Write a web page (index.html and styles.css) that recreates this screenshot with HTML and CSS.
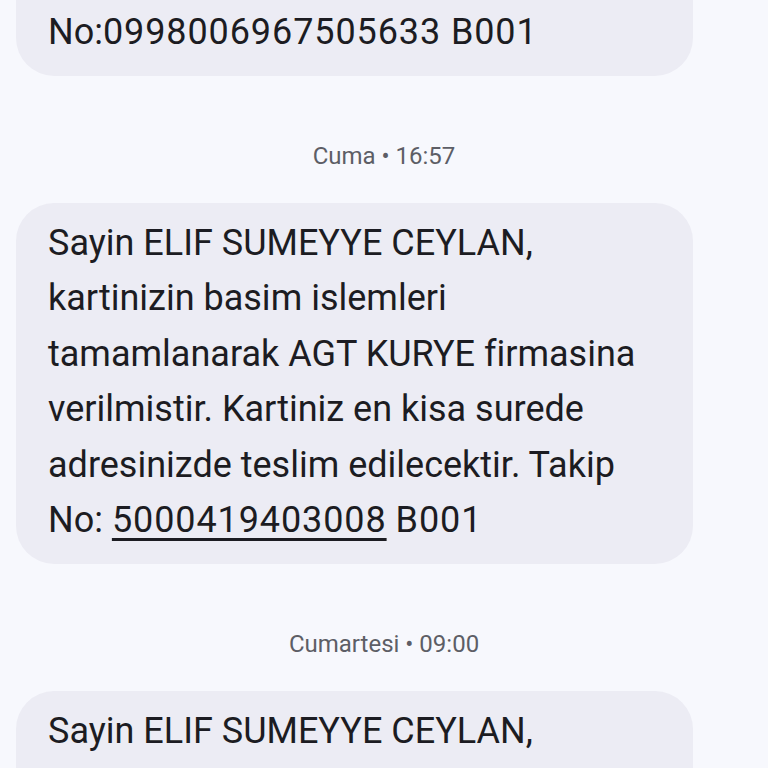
FILE: index.html
```html
<!DOCTYPE html>
<html lang="tr">
<head>
<meta charset="utf-8">
<link rel="stylesheet" href="styles.css">
</head>
<body>
<div class="thread">
  <div class="bubble bubble-first">
    <p class="msg">No:<span class="num">0998006967505633 B001</span></p>
  </div>
  <div class="stamp">Cuma • 16:57</div>
  <div class="bubble">
    <p class="msg">Sayin ELIF SUMEYYE CEYLAN,<br>kartinizin basim islemleri<br>tamamlanarak AGT KURYE firmasina<br>verilmistir. Kartiniz en kisa surede<br>adresinizde teslim edilecektir. Takip<br>No: <span class="num link">5000419403008</span> <span class="num">B001</span></p>
  </div>
  <div class="stamp">Cumartesi • 09:00</div>
  <div class="bubble bubble-last">
    <p class="msg">Sayin ELIF SUMEYYE CEYLAN,</p>
  </div>
</div>
</body>
</html>
```
FILE: styles.css
```css
html, body {
  margin: 0;
  padding: 0;
  background: #f7f8fd;
}
body {
  width: 768px;
  height: 768px;
  overflow: hidden;
  font-family: Roboto, "Noto Sans", sans-serif;
}
.thread {
  display: flex;
  flex-direction: column;
  padding: 0 75px 0 16px;
}
.bubble {
  background: #ececf4;
  border-radius: 38px;
  padding: 13px 24px 15px 32px;
}
.bubble-first {
  margin-top: -10px;
  padding-top: 15px;
  padding-bottom: 15px;
  border-top-left-radius: 0;
  border-top-right-radius: 0;
}
.bubble-last {
  padding-bottom: 80px;
}
.msg {
  margin: 0;
  font-size: 36px;
  line-height: 55.5px;
  color: #1c1c22;
  white-space: nowrap;
}
.num {
  letter-spacing: 0.9px;
}
.link {
  text-decoration: underline;
  text-decoration-thickness: 3px;
  text-underline-offset: 6px;
}
.stamp {
  margin: 65px 0 32px;
  line-height: 30px;
  font-size: 24px;
  color: #5d5e66;
  text-align: center;
  padding-left: 59px;
}
```
